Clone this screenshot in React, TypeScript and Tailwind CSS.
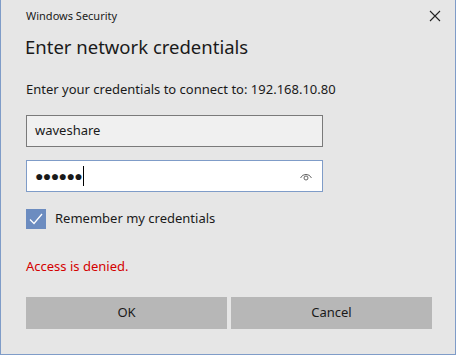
import React from 'react';

const font = { fontFamily: '"Noto Sans", "Open Sans", sans-serif' };

export default function App() {
  return (
    <div className="w-[457px] h-[357px] bg-white" style={font}>
      <div className="w-[456px] h-[355px] bg-[#e6e6e6] border-l border-r border-b border-[#7f9cc8] flex flex-col text-[#1a1a1a]">
        <div className="flex items-center justify-between pl-[25px] pr-[14px] pt-[7px] h-[24px]">
          <span className="text-[11px] leading-none">Windows Security</span>
          <svg width="12" height="12" viewBox="0 0 12 12" className="mt-[1px]">
            <path d="M1 1 L11 11 M11 1 L1 11" stroke="#222" strokeWidth="1.1" />
          </svg>
        </div>
        <div className="pl-[24px] mt-[10px] text-[18.5px] leading-[26px]">Enter network credentials</div>
        <div className="pl-[25px] mt-[20px] text-[13px] leading-[18px]">
          Enter your credentials to connect to: 192.168.10.80
        </div>
        <div className="pl-[25px] mt-[17px] flex flex-col gap-[13px]">
          <div className="w-[297px] h-[32px] bg-[#f0f0f0] border border-[#7a7a7a] flex items-center px-[8px] text-[13px]">
            waveshare
          </div>
          <div className="w-[297px] h-[32px] bg-white border border-[#7f9cc8] flex items-center pl-[8px] pr-[9px]">
            <span className="text-[14px] tracking-[-0.6px] leading-none">●●●●●●</span>
            <span className="w-px h-[20px] bg-black ml-[1px]" />
            <span className="flex-1" />
            <svg width="14" height="10" viewBox="0 0 14 10">
              <path d="M1.5 7 A6 6 0 0 1 12.5 7" fill="none" stroke="#666" strokeWidth="1" />
              <circle cx="7" cy="7" r="2" fill="none" stroke="#666" strokeWidth="1" />
            </svg>
          </div>
        </div>
        <div className="pl-[25px] mt-[17px] flex items-center gap-[9px]">
          <div className="w-[20px] h-[20px] bg-[#6c8cc0] flex items-center justify-center">
            <svg width="14" height="12" viewBox="0 0 14 12">
              <path d="M1 6.5 L5 10.5 L13 1" fill="none" stroke="white" strokeWidth="1.3" />
            </svg>
          </div>
          <span className="text-[13px]">Remember my credentials</span>
        </div>
        <div className="pl-[25px] mt-[28px] text-[13px] text-[#d40000] leading-[18px]">Access is denied.</div>
        <div className="pl-[25px] mt-[22px] flex gap-[4px]">
          <div className="w-[201px] h-[32px] bg-[#b7b7b7] flex items-center justify-center text-[13px]">OK</div>
          <div className="w-[201px] h-[32px] bg-[#b7b7b7] flex items-center justify-center text-[13px]">Cancel</div>
        </div>
      </div>
    </div>
  );
}
